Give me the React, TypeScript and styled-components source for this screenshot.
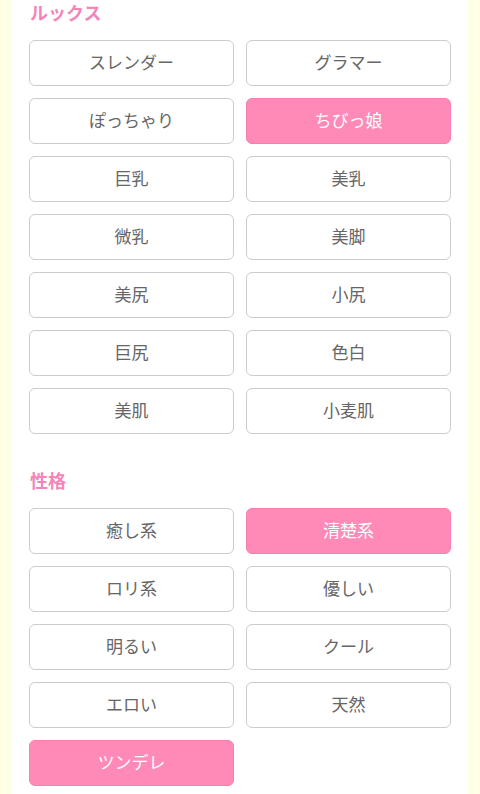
import React from "react";
import styled, { createGlobalStyle } from "styled-components";

const GlobalStyle = createGlobalStyle`
  html, body {
    margin: 0;
    padding: 0;
    background: #ffffe3;
    font-family: "Noto Sans CJK JP", "Noto Sans", sans-serif;
  }
`;

const Page = styled.div`
  background: #ffffe3;
  padding: 0 12px;
  min-height: 794px;
`;

const Panel = styled.div`
  background: #ffffff;
  padding: 0 17px 20px;
  min-height: 794px;
  box-sizing: border-box;
`;

const Section = styled.section`
  & + & {
    margin-top: 34px;
  }
`;

const Heading = styled.h2`
  margin: 0 0 15px;
  padding-left: 1px;
  height: 25px;
  line-height: 25px;
  font-size: 18px;
  font-weight: 700;
  color: #f585b8;
`;

const Grid = styled.div`
  display: grid;
  grid-template-columns: 1fr 1fr;
  gap: 12px;
`;

const Chip = styled.button<{ $active?: boolean }>`
  height: 46px;
  box-sizing: border-box;
  border-radius: 6px;
  border: 1px solid ${({ $active }) => ($active ? "#f57fae" : "#cccccc")};
  background: ${({ $active }) => ($active ? "#ff8ab8" : "#ffffff")};
  color: ${({ $active }) => ($active ? "#ffffff" : "#666666")};
  font-family: inherit;
  font-size: 17px;
  font-weight: 400;
  line-height: 1;
  padding: 0 0 3px;
  cursor: pointer;
`;

type Option = { label: string; active?: boolean };

const looks: Option[] = [
  { label: "スレンダー" },
  { label: "グラマー" },
  { label: "ぽっちゃり" },
  { label: "ちびっ娘", active: true },
  { label: "巨乳" },
  { label: "美乳" },
  { label: "微乳" },
  { label: "美脚" },
  { label: "美尻" },
  { label: "小尻" },
  { label: "巨尻" },
  { label: "色白" },
  { label: "美肌" },
  { label: "小麦肌" },
];

const personality: Option[] = [
  { label: "癒し系" },
  { label: "清楚系", active: true },
  { label: "ロリ系" },
  { label: "優しい" },
  { label: "明るい" },
  { label: "クール" },
  { label: "エロい" },
  { label: "天然" },
  { label: "ツンデレ", active: true },
];

const OptionGroup = ({ title, options }: { title: string; options: Option[] }) => (
  <Section>
    <Heading>{title}</Heading>
    <Grid>
      {options.map((o) => (
        <Chip key={o.label} $active={o.active}>
          {o.label}
        </Chip>
      ))}
    </Grid>
  </Section>
);

const App = () => (
  <>
    <GlobalStyle />
    <Page>
      <Panel>
        <OptionGroup title="ルックス" options={looks} />
        <OptionGroup title="性格" options={personality} />
      </Panel>
    </Page>
  </>
);

export default App;
